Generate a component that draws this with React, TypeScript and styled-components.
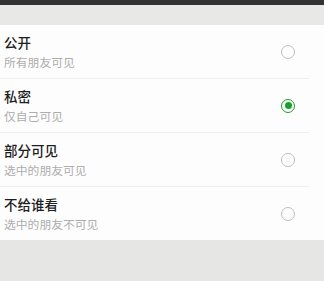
import React, { useState } from 'react'
import styled, { createGlobalStyle } from 'styled-components'

const GlobalStyle = createGlobalStyle`
  html, body {
    margin: 0;
    padding: 0;
    height: 100%;
    background: #e6e6e4;
  }
  #root {
    height: 100%;
  }
`

const Page = styled.div`
  display: flex;
  flex-direction: column;
  height: 100%;
  font-family: "Noto Sans CJK SC", "Noto Sans", sans-serif;
  background: #e6e6e4;
`

const StatusBar = styled.div`
  height: 5px;
  background: #323232;
`

const Spacer = styled.div`
  height: 20px;
  background: #e8e8e7;
`

const List = styled.div`
  background: #fdfdfd;
`

const Row = styled.div<{ $last?: boolean }>`
  display: flex;
  align-items: center;
  justify-content: space-between;
  box-sizing: border-box;
  height: ${({ $last }) => ($last ? 53 : 54)}px;
  margin-right: 15px;
  padding-left: 4px;
  border-bottom: ${({ $last }) => ($last ? 'none' : '1px solid #efefef')};
  cursor: pointer;
`

const Texts = styled.div`
  display: flex;
  flex-direction: column;
  gap: 5px;
`

const Title = styled.div`
  font-size: 13.5px;
  line-height: 16px;
  font-weight: 500;
  color: #1e1e1e;
`

const Sub = styled.div`
  font-size: 11.8px;
  line-height: 14px;
  color: #adadad;
`

const Radio = styled.div<{ $checked?: boolean }>`
  box-sizing: border-box;
  width: 14px;
  height: 14px;
  margin-right: 14px;
  border-radius: 50%;
  border: ${({ $checked }) => ($checked ? '1.5px solid #17a02a' : '1.2px solid #bdbdbd')};
  display: flex;
  align-items: center;
  justify-content: center;

  &::after {
    content: '';
    display: ${({ $checked }) => ($checked ? 'block' : 'none')};
    width: 7px;
    height: 7px;
    border-radius: 50%;
    background: #17a02a;
  }
`

const options = [
  { title: '公开', sub: '所有朋友可见' },
  { title: '私密', sub: '仅自己可见' },
  { title: '部分可见', sub: '选中的朋友可见' },
  { title: '不给谁看', sub: '选中的朋友不可见' },
]

const App = () => {
  const [selected, setSelected] = useState(1)

  return (
    <Page>
      <GlobalStyle />
      <StatusBar />
      <Spacer />
      <List>
        {options.map((o, i) => (
          <Row key={o.title} $last={i === options.length - 1} onClick={() => setSelected(i)}>
            <Texts>
              <Title>{o.title}</Title>
              <Sub>{o.sub}</Sub>
            </Texts>
            <Radio $checked={selected === i} />
          </Row>
        ))}
      </List>
    </Page>
  )
}

export default App
